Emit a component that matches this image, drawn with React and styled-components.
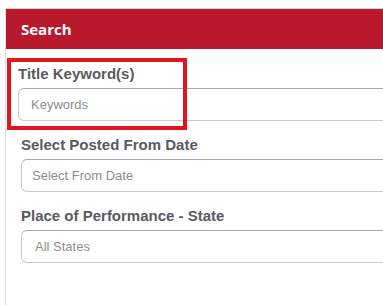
import React from "react";
import styled, { createGlobalStyle } from "styled-components";

const GlobalStyle = createGlobalStyle`
  html, body {
    margin: 0;
    padding: 0;
    background: #fff;
    overflow: hidden;
  }
`;

const Panel = styled.div`
  position: relative;
  margin: 8px 0 0 5px;
  width: 440px;
  height: 297px;
  border-top: 1px solid #d4d4d4;
  border-left: 1px solid #dcdcdc;
  box-sizing: border-box;
`;

const Header = styled.div`
  height: 40px;
  display: flex;
  align-items: center;
  padding-left: 15px;
  background: #b8192c;
  color: #fff;
  font-family: "Open Sans", sans-serif;
  font-weight: 700;
  font-size: 15px;
`;

const Body = styled.div`
  display: flex;
  flex-direction: column;
  gap: 15px;
  padding: 16px 0 0 15px;
`;

const Field = styled.div`
  display: flex;
  flex-direction: column;
  gap: 5px;
  margin-left: ${(p) => (p.$shift ? "-3px" : "0")};
`;

const Label = styled.label`
  font-family: "Liberation Sans", Arial, sans-serif;
  font-weight: 700;
  font-size: 15px;
  line-height: 18px;
  color: #5b5b5e;
`;

const Box = styled.div`
  height: 33px;
  box-sizing: border-box;
  display: flex;
  align-items: center;
  padding-left: ${(p) => p.$pad || 10}px;
  border: 1px solid #cbcbcb;
  border-top-color: #a9a9a9;
  border-radius: 6px;
  font-family: "Liberation Sans", Arial, sans-serif;
  font-size: 13px;
  color: #8e8e8e;
`;

const Highlight = styled.div`
  position: absolute;
  left: 1px;
  top: 49px;
  width: 180px;
  height: 72px;
  box-sizing: border-box;
  border: 4px solid #e2161f;
  pointer-events: none;
`;

export default function App() {
  return (
    <>
      <GlobalStyle />
      <Panel>
        <Header>Search</Header>
        <Body>
          <Field $shift>
            <Label>Title Keyword(s)</Label>
            <Box $pad={12}>Keywords</Box>
          </Field>
          <Field>
            <Label>Select Posted From Date</Label>
            <Box $pad={10}>Select From Date</Box>
          </Field>
          <Field>
            <Label>Place of Performance - State</Label>
            <Box $pad={13}>All States</Box>
          </Field>
        </Body>
        <Highlight />
      </Panel>
    </>
  );
}
